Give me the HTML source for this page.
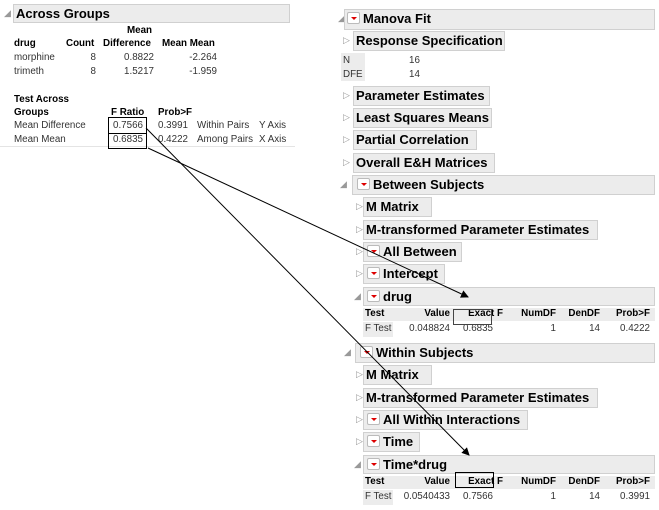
<!DOCTYPE html>
<html><head><style>
body{margin:0;width:659px;height:510px;background:#fff;position:relative;overflow:hidden;font-family:"Liberation Sans",Arial,sans-serif;}
.a{position:absolute;white-space:nowrap;}
.h{position:absolute;background:#ececec;border:1px solid #d0d0d0;box-sizing:border-box;font-weight:bold;font-size:13px;color:#000;line-height:18px;padding-left:2px;white-space:nowrap;}
.t{font-size:9.8px;color:#333;}
.b{font-size:9.8px;font-weight:bold;color:#000;}
.r{text-align:right;}
.tri{position:absolute;font-size:9px;color:#999;}
.m{display:inline-block;width:11px;height:10px;background:#fff;border:1px solid #bbb;border-radius:2px;vertical-align:-1px;margin-right:3px;position:relative;}
.m:after{content:"";position:absolute;left:2.5px;top:3.5px;border-left:3px solid transparent;border-right:3px solid transparent;border-top:3px solid #d00;}
.th{position:absolute;background:#ececec;height:13px;}
</style></head><body>
<!-- left -->
<div class="tri a" style="left:4px;top:8px">&#9698;</div>
<div class="h" style="left:13px;top:4px;width:277px;height:19px;font-size:13px">Across Groups</div>
<div class="a b" style="left:127px;top:25px">Mean</div>
<div class="a b" style="left:14px;top:38px">drug</div>
<div class="a b" style="left:66px;top:38px">Count</div>
<div class="a b" style="left:103px;top:38px">Difference</div>
<div class="a b" style="left:162px;top:38px">Mean Mean</div>
<div class="a t" style="left:14px;top:52px">morphine</div>
<div class="a t r" style="left:60px;top:52px;width:36px">8</div>
<div class="a t r" style="left:110px;top:52px;width:44px">0.8822</div>
<div class="a t r" style="left:170px;top:52px;width:47px">-2.264</div>
<div class="a t" style="left:14px;top:66px">trimeth</div>
<div class="a t r" style="left:60px;top:66px;width:36px">8</div>
<div class="a t r" style="left:110px;top:66px;width:44px">1.5217</div>
<div class="a t r" style="left:170px;top:66px;width:47px">-1.959</div>
<div class="a b" style="left:14px;top:94px">Test Across</div>
<div class="a b" style="left:14px;top:107px">Groups</div>
<div class="a b" style="left:111px;top:107px">F Ratio</div>
<div class="a b" style="left:158px;top:107px">Prob&gt;F</div>
<div class="a t" style="left:14px;top:120px">Mean Difference</div>
<div class="a t" style="left:113px;top:120px">0.7566</div>
<div class="a t" style="left:158px;top:120px">0.3991</div>
<div class="a t" style="left:197px;top:120px">Within Pairs</div>
<div class="a t" style="left:259px;top:120px">Y Axis</div>
<div class="a t" style="left:14px;top:134px">Mean Mean</div>
<div class="a t" style="left:113px;top:134px">0.6835</div>
<div class="a t" style="left:158px;top:134px">0.4222</div>
<div class="a t" style="left:197px;top:134px">Among Pairs</div>
<div class="a t" style="left:259px;top:134px">X Axis</div>
<div class="a" style="left:0;top:146px;width:295px;height:1px;background:#e4e4e4"></div>

<!-- right -->
<div class="tri a" style="left:338px;top:13px">&#9698;</div>
<div class="h" style="left:344px;top:9px;width:311px;height:21px;padding-left:2px"><span class="m"></span>Manova Fit</div>
<div class="tri a" style="left:343px;top:35px">&#9655;</div>
<div class="h" style="left:353px;top:31px;width:152px;height:20px">Response Specification</div>
<div class="a" style="left:341px;top:53px;width:24px;height:28px;background:#ececec"></div>
<div class="a t" style="left:343px;top:55px">N</div>
<div class="a t" style="left:409px;top:55px">16</div>
<div class="a t" style="left:343px;top:69px">DFE</div>
<div class="a t" style="left:409px;top:69px">14</div>
<div class="tri a" style="left:343px;top:90px">&#9655;</div>
<div class="h" style="left:353px;top:86px;width:137px;height:20px">Parameter Estimates</div>
<div class="tri a" style="left:343px;top:112px">&#9655;</div>
<div class="h" style="left:353px;top:108px;width:139px;height:20px">Least Squares Means</div>
<div class="tri a" style="left:343px;top:134px">&#9655;</div>
<div class="h" style="left:353px;top:130px;width:124px;height:20px">Partial Correlation</div>
<div class="tri a" style="left:343px;top:157px">&#9655;</div>
<div class="h" style="left:353px;top:153px;width:142px;height:20px">Overall E&amp;H Matrices</div>
<div class="tri a" style="left:340px;top:179px">&#9698;</div>
<div class="h" style="left:352px;top:175px;width:303px;height:20px;padding-left:4px"><span class="m"></span>Between Subjects</div>
<div class="tri a" style="left:356px;top:201px">&#9655;</div>
<div class="h" style="left:363px;top:197px;width:69px;height:20px">M Matrix</div>
<div class="tri a" style="left:356px;top:224px">&#9655;</div>
<div class="h" style="left:363px;top:220px;width:235px;height:20px">M-transformed Parameter Estimates</div>
<div class="tri a" style="left:356px;top:246px">&#9655;</div>
<div class="h" style="left:363px;top:242px;width:99px;height:20px;padding-left:3px"><span class="m"></span>All Between</div>
<div class="tri a" style="left:356px;top:268px">&#9655;</div>
<div class="h" style="left:363px;top:264px;width:82px;height:20px;padding-left:3px"><span class="m"></span>Intercept</div>
<div class="tri a" style="left:354px;top:291px">&#9698;</div>
<div class="h" style="left:363px;top:287px;width:292px;height:19px;padding-left:3px"><span class="m"></span>drug</div>
<div class="th" style="left:363px;top:308px;width:292px"></div>
<div class="a" style="left:363px;top:322px;width:30px;height:15px;background:#ececec"></div>
<div class="a b" style="left:365px;top:308px">Test</div>
<div class="a b r" style="left:400px;top:308px;width:50px">Value</div>
<div class="a b r" style="left:453px;top:308px;width:50px">Exact F</div>
<div class="a b r" style="left:506px;top:308px;width:50px">NumDF</div>
<div class="a b r" style="left:550px;top:308px;width:50px">DenDF</div>
<div class="a b r" style="left:600px;top:308px;width:50px">Prob&gt;F</div>
<div class="a t" style="left:365px;top:323px">F Test</div>
<div class="a t r" style="left:400px;top:323px;width:50px">0.048824</div>
<div class="a t r" style="left:443px;top:323px;width:50px">0.6835</div>
<div class="a t r" style="left:506px;top:323px;width:50px">1</div>
<div class="a t r" style="left:550px;top:323px;width:50px">14</div>
<div class="a t r" style="left:600px;top:323px;width:50px">0.4222</div>
<div class="tri a" style="left:344px;top:347px">&#9698;</div>
<div class="h" style="left:355px;top:343px;width:300px;height:20px;padding-left:4px"><span class="m"></span>Within Subjects</div>
<div class="tri a" style="left:356px;top:369px">&#9655;</div>
<div class="h" style="left:363px;top:365px;width:69px;height:20px">M Matrix</div>
<div class="tri a" style="left:356px;top:392px">&#9655;</div>
<div class="h" style="left:363px;top:388px;width:235px;height:20px">M-transformed Parameter Estimates</div>
<div class="tri a" style="left:356px;top:414px">&#9655;</div>
<div class="h" style="left:363px;top:410px;width:165px;height:20px;padding-left:3px"><span class="m"></span>All Within Interactions</div>
<div class="tri a" style="left:356px;top:436px">&#9655;</div>
<div class="h" style="left:363px;top:432px;width:57px;height:20px;padding-left:3px"><span class="m"></span>Time</div>
<div class="tri a" style="left:354px;top:459px">&#9698;</div>
<div class="h" style="left:363px;top:455px;width:292px;height:19px;padding-left:3px"><span class="m"></span>Time*drug</div>
<div class="th" style="left:363px;top:476px;width:292px"></div>
<div class="a" style="left:363px;top:490px;width:30px;height:15px;background:#ececec"></div>
<div class="a b" style="left:365px;top:476px">Test</div>
<div class="a b r" style="left:400px;top:476px;width:50px">Value</div>
<div class="a b r" style="left:453px;top:476px;width:50px">Exact F</div>
<div class="a b r" style="left:506px;top:476px;width:50px">NumDF</div>
<div class="a b r" style="left:550px;top:476px;width:50px">DenDF</div>
<div class="a b r" style="left:600px;top:476px;width:50px">Prob&gt;F</div>
<div class="a t" style="left:365px;top:491px">F Test</div>
<div class="a t r" style="left:400px;top:491px;width:50px">0.0540433</div>
<div class="a t r" style="left:443px;top:491px;width:50px">0.7566</div>
<div class="a t r" style="left:506px;top:491px;width:50px">1</div>
<div class="a t r" style="left:550px;top:491px;width:50px">14</div>
<div class="a t r" style="left:600px;top:491px;width:50px">0.3991</div>

<svg class="a" style="left:0;top:0" width="659" height="510">
<defs><marker id="ar" markerWidth="8" markerHeight="8" refX="7" refY="4" orient="auto" markerUnits="userSpaceOnUse" viewBox="0 0 8 8"><path d="M0,0 L8,4 L0,8 z" fill="#000"/></marker></defs>
<rect x="108.5" y="117.5" width="38" height="16" fill="none" stroke="#000" stroke-width="1"/>
<rect x="108.5" y="133.5" width="38" height="15" fill="none" stroke="#000" stroke-width="1"/>
<rect x="453.5" y="309.5" width="38" height="15" fill="none" stroke="#444" stroke-width="1"/>
<rect x="455.5" y="472.5" width="38" height="15" fill="none" stroke="#000" stroke-width="1"/>
<line x1="146" y1="128" x2="469" y2="455" stroke="#000" stroke-width="1" marker-end="url(#ar)"/>
<line x1="148" y1="148" x2="468" y2="297" stroke="#000" stroke-width="1" marker-end="url(#ar)"/>
</svg>
</body></html>
